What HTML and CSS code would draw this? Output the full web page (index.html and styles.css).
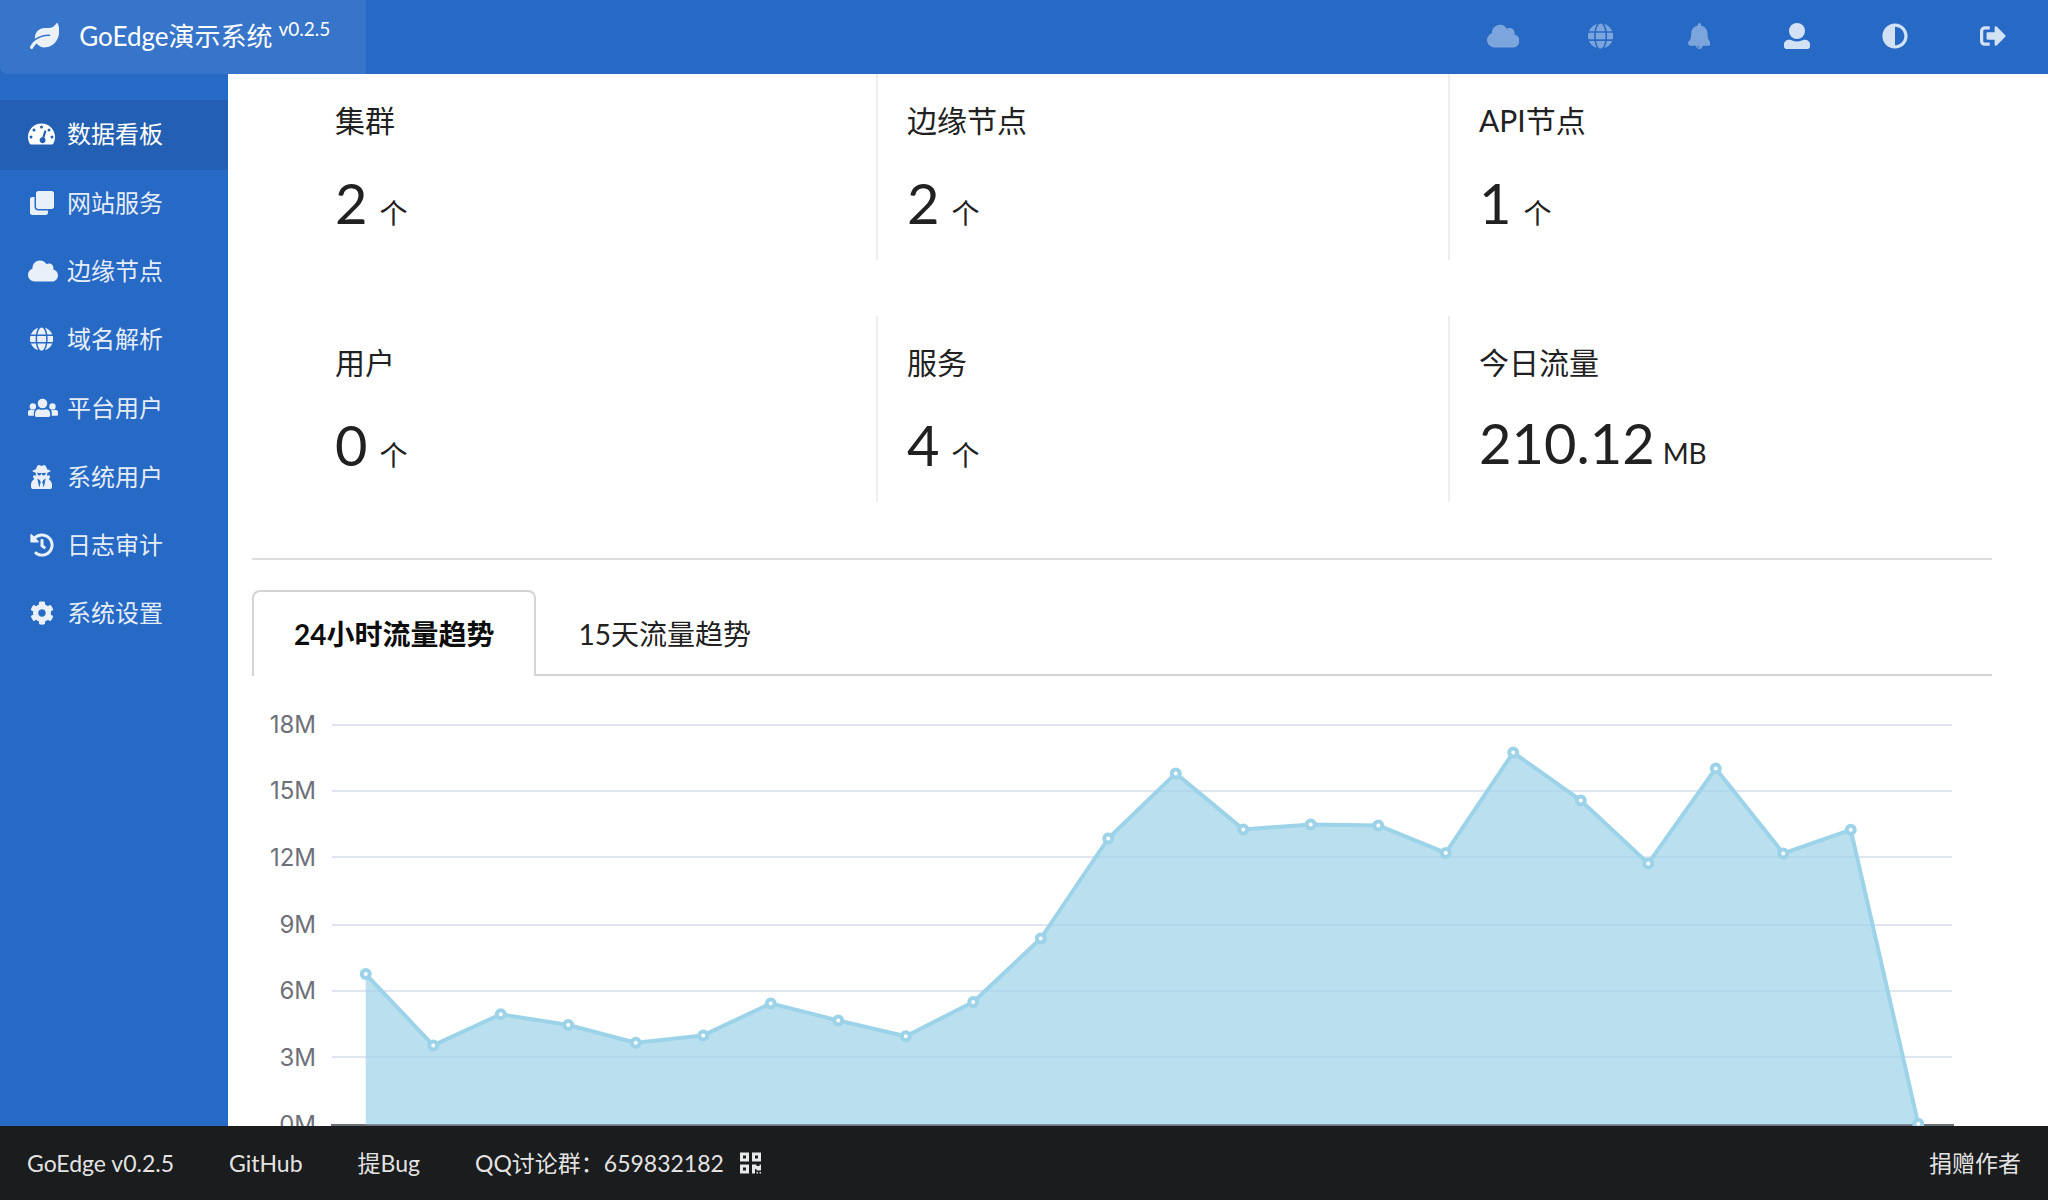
FILE: index.html
```html
<!DOCTYPE html>
<html lang="zh-CN">
<head>
<meta charset="utf-8">
<title>GoEdge演示系统</title>
<link rel="stylesheet" href="styles.css">
</head>
<body>
<svg class="sprite" aria-hidden="true">
  <symbol id="cloud" viewBox="0 0 640 512"><path d="M537.6 226.600c4.100-10.700 6.400-22.400 6.400-34.600 0-53-43-96-96-96-19.700 0-38.100 6-53.300 16.200C367 64.200 315.300 32 256 32c-88.400 0-160 71.600-160 160 0 2.700.1 5.400.2 8.100C40.200 219.800 0 273.200 0 336c0 79.500 64.500 144 144 144h368c70.700 0 128-57.300 128-128 0-61.900-44-113.600-102.400-125.400z"/></symbol>
  <symbol id="globe" viewBox="0 0 496 512"><path d="M336.500 160C322 70.700 287.800 8 248 8s-74 62.700-88.500 152h177zM152 256c0 22.200 1.200 43.500 3.300 64h185.300c2.100-20.500 3.300-41.800 3.300-64s-1.200-43.500-3.300-64H155.300c-2.100 20.500-3.300 41.800-3.300 64zm324.700-96c-28.600-67.900-86.500-120.400-158-141.600 24.400 33.800 41.200 84.700 50 141.600h108zM177.200 18.400C105.800 39.600 47.800 92.100 19.300 160h108c8.700-56.900 25.500-107.800 49.900-141.600zM487.400 192H372.700c2.100 21 3.300 42.500 3.300 64s-1.200 43-3.300 64h114.600c5.500-20.500 8.600-41.800 8.600-64s-3.100-43.500-8.500-64zM120 256c0-21.500 1.200-43 3.300-64H8.600C3.200 212.500 0 233.800 0 256s3.200 43.500 8.600 64h114.600c-2-21-3.200-42.500-3.200-64zm39.500 96c14.500 89.300 48.700 152 88.500 152s74-62.700 88.500-152h-177zm159.300 141.600c71.400-21.200 129.400-73.700 158-141.600h-108c-8.800 56.900-25.600 107.800-50 141.600zM19.300 352c28.600 67.900 86.500 120.400 158 141.600-24.400-33.800-41.200-84.700-50-141.600h-108z"/></symbol>
</svg>
<header class="topbar">
  <a class="brand" href="#">
    <svg class="icon" viewBox="0 0 576 512"><path d="M546.200 9.700c-5.600-12.500-21.600-13-28.300-1.200C486.900 62.400 431.400 96 368 96h-80C182 96 96 182 96 288c0 7 .8 13.700 1.500 20.500C161.300 262.800 253.400 224 384 224c8.800 0 16 7.200 16 16s-7.200 16-16 16C132.600 256 26 410.100 2.400 468c-6.600 16.300 1.200 34.900 17.500 41.600 16.400 6.800 35-1.100 41.800-17.300 1.500-3.600 20.900-47.900 71.900-90.600 32.400 43.900 94 85.800 174.900 77.200C465.500 467.500 576 326.700 576 154.300c0-50.200-10.800-102.200-29.800-144.600z"/></svg>
    <span class="brand-name">GoEdge演示系统</span>
    <span class="brand-version">v0.2.5</span>
  </a>
  <nav class="tools" aria-label="工具">
    <a class="tool muted" href="#" aria-label="集群"><svg class="icon" viewBox="0 0 640 512"><use href="#cloud"/></svg></a>
    <a class="tool muted" href="#" aria-label="域名"><svg class="icon" viewBox="0 0 496 512"><use href="#globe"/></svg></a>
    <a class="tool muted" href="#" aria-label="消息"><svg class="icon" viewBox="0 0 448 512"><path fill-rule="evenodd" d="M433.884 366.059C411.634 343.809 384 316.118 384 208c0-79.394-57.831-145.269-133.663-157.830A31.845 31.845 0 0 0 256 32c0-17.673-14.327-32-32-32s-32 14.327-32 32c0 6.750 2.095 13.008 5.663 18.170C121.831 62.731 64 128.606 64 208c0 108.118-27.643 135.809-49.893 158.059C-16.042 396.208 5.325 448 48.048 448H160c0 35.346 28.654 64 64 64s64-28.654 64-64h111.943c42.638 0 64.151-51.731 33.941-81.941zM224 472a8 8 0 0 1 0 16c-22.056 0-40-17.944-40-40h16c0 13.234 10.766 24 24 24z"/></svg></a>
    <a class="tool" href="#" aria-label="账户"><svg class="icon" viewBox="0 0 512 512"><ellipse cx="256" cy="158" rx="158" ry="158"/><path d="M0 424c0-50 42-92 104-92 26 0 40 6 56 13 60 26 132 26 192 0 16-7 30-13 56-13 62 0 104 42 104 92v40c0 26-22 48-48 48H48c-26 0-48-22-48-48z"/></svg></a>
    <a class="tool" href="#" aria-label="切换主题"><svg class="icon" viewBox="0 0 512 512"><path fill-rule="evenodd" d="M8 256c0 136.966 111.033 248 248 248s248-111.034 248-248S392.966 8 256 8 8 119.033 8 256zm248 184V72c101.705 0 184 82.311 184 184 0 101.705-82.311 184-184 184z"/></svg></a>
    <a class="tool" href="#" aria-label="退出登录"><svg class="icon" viewBox="0 0 512 512"><path d="M497 273L329 441c-15 15-41 4.500-41-17v-96H152c-13.300 0-24-10.700-24-24v-96c0-13.300 10.700-24 24-24h136V88c0-21.400 25.900-32 41-17l168 168c9.300 9.400 9.300 24.600 0 34zM192 436v-40c0-6.600-5.400-12-12-12H96c-17.700 0-32-14.300-32-32V160c0-17.700 14.300-32 32-32h84c6.600 0 12-5.400 12-12V76c0-6.600-5.400-12-12-12H96c-53 0-96 43-96 96v192c0 53 43 96 96 96h84c6.600 0 12-5.400 12-12z"/></svg></a>
  </nav>
</header>

<nav class="sidebar" aria-label="主菜单">
  <a class="side-link active" href="#"><span class="side-icon"><svg class="icon" viewBox="0 0 576 512"><path fill-rule="evenodd" d="M288 32C129 32 0 161 0 320c0 53 14 102 39 145 6 10 16 15 28 15h442c12 0 22-5 28-15 25-43 39-92 39-145C576 161 447 32 288 32zM256 104a32 32 0 1 0 64 0 32 32 0 1 0-64 0zM96 168a32 32 0 1 0 64 0 32 32 0 1 0-64 0zM416 168a32 32 0 1 0 64 0 32 32 0 1 0-64 0zM32 320a32 32 0 1 0 64 0 32 32 0 1 0-64 0zM480 320a32 32 0 1 0 64 0 32 32 0 1 0-64 0zM375 179c12 4 18 15 15 27l-41 131c16 12 27 31 27 52 0 35-28 63-64 63s-64-28-64-63c0-34 26-61 58-63l38-130c4-12 18-20 31-17z"/></svg></span>数据看板</a>
  <a class="side-link" href="#"><span class="side-icon"><svg class="icon" viewBox="0 0 512 512"><path d="M464 0c26.510 0 48 21.490 48 48v288c0 26.510-21.490 48-48 48H176c-26.510 0-48-21.490-48-48V48c0-26.510 21.490-48 48-48h288M176 416c-44.112 0-80-35.888-80-80V128H48c-26.510 0-48 21.490-48 48v288c0 26.510 21.490 48 48 48h288c26.510 0 48-21.490 48-48v-48H176z"/></svg></span>网站服务</a>
  <a class="side-link" href="#"><span class="side-icon"><svg class="icon" viewBox="0 0 640 512"><use href="#cloud"/></svg></span>边缘节点</a>
  <a class="side-link" href="#"><span class="side-icon"><svg class="icon" viewBox="0 0 496 512"><use href="#globe"/></svg></span>域名解析</a>
  <a class="side-link" href="#"><span class="side-icon"><svg class="icon" viewBox="0 0 640 512"><circle cx="310" cy="160" r="102"/><circle cx="104" cy="222" r="68"/><circle cx="522" cy="222" r="68"/><path d="M150 380c0-60 36-98 90-98 44 16 96 16 140 0 56 0 92 38 92 98v36c0 16-12 30-30 30H180c-18 0-30-14-30-30zM0 350c0-34 22-56 58-56 30 12 62 12 90 0-14 22-24 50-24 80v46H28c-16 0-28-12-28-28zM640 350c0-34-22-56-58-56-30 12-62 12-90 0 10 22 16 50 16 80v46h104c16 0 28-12 28-28z"/></svg></span>平台用户</a>
  <a class="side-link" href="#"><span class="side-icon"><svg class="icon" viewBox="0 0 448 512"><path fill-rule="evenodd" d="M383.900 308.300l23.900-62.600c4-10.500-3.700-21.700-15-21.700h-58.500c11-18.900 17.800-40.600 17.800-64v-.3c39.200-7.800 64-19.100 64-31.700 0-13.300-27.300-25.100-70.100-33-9.200-32.800-27-65.800-40.600-82.800-9.500-11.900-25.900-15.600-39.500-8.800l-27.600 13.800c-9 4.500-19.600 4.500-28.600 0L182.100 3.400c-13.600-6.800-30-3.100-39.500 8.800-13.500 17-31.400 50-40.600 82.800-42.700 7.900-70 19.700-70 33 0 12.600 24.800 23.900 64 31.700v.3c0 23.400 6.800 45.100 17.800 64H56.300c-11.500 0-19.200 11.700-14.700 22.300l25.800 60.200C27.300 329.800 0 372.700 0 422.400v44.800C0 491.900 20.100 512 44.800 512h358.400c24.700 0 44.800-20.100 44.800-44.800v-44.800c0-48.400-25.800-90.400-64.100-114.100zM176 480l-41.600-192 49.600 32 24 40-32 120zm96 0l-32-120 24-40 49.600-32L272 480zm41.700-298.500c-3.900 11.900-7 24.600-16.500 33.400-10.100 9.300-48 22.400-64-25-2.800-8.400-15.400-8.400-18.300 0-17 50.200-56 32.400-64 25-9.500-8.800-12.700-21.500-16.500-33.400-.8-2.500-6.300-5.700-6.300-5.800v-10.800c28.300 3.600 61 5.800 96 5.800s67.700-2.100 96-5.800v10.800c-.1.100-5.600 3.200-6.400 5.800z"/></svg></span>系统用户</a>
  <a class="side-link" href="#"><span class="side-icon"><svg class="icon" viewBox="0 0 512 512"><path d="M504 255.531c.253 136.640-111.180 248.372-247.820 248.468-59.015.042-113.223-20.530-155.822-54.911-11.077-8.940-11.905-25.541-1.839-35.607l11.267-11.267c8.609-8.609 22.353-9.551 31.891-1.984C173.062 425.135 212.781 440 256 440c101.705 0 184-82.311 184-184 0-101.705-82.311-184-184-184-48.814 0-93.149 18.969-126.068 49.932l50.754 50.754c10.080 10.080 2.941 27.314-11.313 27.314H24c-8.837 0-16-7.163-16-16V38.627c0-14.254 17.234-21.393 27.314-11.314l49.372 49.372C129.209 34.136 189.552 8 256 8c136.810 0 247.747 110.780 248 247.531zm-180.912 78.784l9.823-12.630c8.138-10.463 6.253-25.542-4.210-33.679L288 256.349V152c0-13.255-10.745-24-24-24h-16c-13.255 0-24 10.745-24 24v135.651l65.409 50.874c10.463 8.137 25.541 6.253 33.679-4.210z"/></svg></span>日志审计</a>
  <a class="side-link" href="#"><span class="side-icon"><svg class="icon" viewBox="0 0 512 512"><path d="M487.400 315.700l-42.600-24.600c4.300-23.200 4.300-47 0-70.200l42.600-24.600c4.900-2.800 7.100-8.600 5.500-14-11.100-35.600-30-67.800-54.700-94.600-3.800-4.100-10-5.100-14.800-2.300L380.800 110c-17.900-15.400-38.500-27.300-60.800-35.100V25.800c0-5.600-3.900-10.500-9.400-11.700-36.700-8.200-74.300-7.800-109.200 0-5.500 1.200-9.400 6.100-9.400 11.700V75c-22.200 7.900-42.800 19.800-60.800 35.100L88.700 85.500c-4.900-2.800-11-1.900-14.800 2.300-24.700 26.700-43.600 58.900-54.700 94.600-1.700 5.400.6 11.200 5.500 14L67.300 221c-4.300 23.200-4.300 47 0 70.200l-42.600 24.600c-4.900 2.800-7.100 8.600-5.500 14 11.100 35.600 30 67.800 54.700 94.600 3.800 4.100 10 5.100 14.800 2.300l42.600-24.600c17.900 15.400 38.500 27.300 60.800 35.100v49.200c0 5.600 3.900 10.500 9.400 11.700 36.700 8.200 74.300 7.800 109.200 0 5.500-1.200 9.400-6.100 9.400-11.700v-49.200c22.200-7.900 42.800-19.800 60.800-35.100l42.600 24.600c4.900 2.800 11 1.900 14.800-2.300 24.700-26.700 43.600-58.900 54.700-94.600 1.500-5.500-.7-11.300-5.600-14.100zM256 336c-44.100 0-80-35.900-80-80s35.900-80 80-80 80 35.900 80 80-35.900 80-80 80z"/></svg></span>系统设置</a>
</nav>

<main class="content">
  <section class="stats" aria-label="统计">
    <div class="stat"><h2 class="stat-title">集群</h2><p class="stat-value">2<span class="unit">个</span></p></div>
    <div class="stat"><h2 class="stat-title">边缘节点</h2><p class="stat-value">2<span class="unit">个</span></p></div>
    <div class="stat"><h2 class="stat-title">API节点</h2><p class="stat-value">1<span class="unit">个</span></p></div>
    <div class="stat"><h2 class="stat-title">用户</h2><p class="stat-value">0<span class="unit">个</span></p></div>
    <div class="stat"><h2 class="stat-title">服务</h2><p class="stat-value">4<span class="unit">个</span></p></div>
    <div class="stat"><h2 class="stat-title">今日流量</h2><p class="stat-value latin">210.12<span class="unit">MB</span></p></div>
  </section>
  <hr class="divider">
  <div class="tabs">
    <a class="tab active" href="#">24小时流量趋势</a>
    <a class="tab" href="#">15天流量趋势</a>
  </div>
  <svg class="chart" viewBox="0 0 1740 520" role="img" aria-label="24小时流量趋势">
    <g class="grid-lines">
      <path d="M80 49H1700M80 115H1700M80 181H1700M80 249H1700M80 315H1700M80 381H1700"/>
    </g>
    <path class="axis" d="M79 449H1702"/>
    <g class="axis-labels">
      <text x="64" y="57">18M</text>
      <text x="64" y="123">15M</text>
      <text x="64" y="190">12M</text>
      <text x="64" y="257">9M</text>
      <text x="64" y="323">6M</text>
      <text x="64" y="390">3M</text>
      <text x="64" y="457">0M</text>
    </g>
    <g id="series"></g>
  </svg>
</main>

<footer class="footer">
  <a class="foot-link" href="#">GoEdge v0.2.5</a>
  <a class="foot-link" href="#">GitHub</a>
  <a class="foot-link" href="#">提Bug</a>
  <a class="foot-link" href="#">QQ讨论群：659832182 <svg class="icon qr" viewBox="0 0 448 512"><path fill-rule="evenodd" d="M0 224h192V32H0v192zM64 96h64v64H64V96zm192-64v192h192V32H256zm128 128h-64V96h64v64zM0 480h192V288H0v192zm64-128h64v64H64v-64zm352-64h32v128h-96v-32h-32v96h-64V288h96v32h64v-32zm0 160h32v32h-32v-32zm-64 0h32v32h-32v-32z"/></svg></a>
  <a class="foot-link donate" href="#">捐赠作者</a>
</footer>
<script src="chart.js"></script>
</body>
</html>
```
FILE: styles.css
```css
* { box-sizing: border-box; }

body {
  margin: 0;
  height: 100vh;
  display: grid;
  grid-template: 74px minmax(0, 1fr) 74px / 228px minmax(0, 1fr);
  font-family: Lato, "Noto Sans CJK SC", sans-serif;
  font-size: 24px;
  line-height: 34px;
  color: #212121;
  background: #fff;
}

a { color: inherit; text-decoration: none; }

.sprite { display: none; }
.icon { display: block; flex: none; height: 24px; fill: currentColor; }

.topbar {
  grid-column: 1 / -1;
  display: flex;
  justify-content: space-between;
  background: #276ac6;
  color: #fff;
}
.topbar .icon { height: 26px; }

.brand {
  display: flex;
  align-items: center;
  width: 366px;
  padding: 0 0 2px 30px;
  background: rgba(255, 255, 255, .08);
  border-radius: 0 0 0 8px;
  font-size: 26px;
}
.brand .icon { opacity: .9; }
.brand-name { margin-left: 20px; }
.brand-version { margin-left: 6px; padding-bottom: 14px; font-size: 19px; }

.tools { display: flex; padding: 0 6px 2px 0; }
.tool {
  display: flex;
  align-items: center;
  justify-content: center;
  width: 98px;
  color: rgba(255, 255, 255, .8);
}
.tool.muted { color: rgba(255, 255, 255, .4); }

.sidebar { padding-top: 26px; background: #276ac6; }
.side-link {
  display: flex;
  align-items: center;
  gap: 12px;
  height: 68px;
  padding: 0 0 2px 28px;
  color: rgba(255, 255, 255, .9);
}
.side-link:nth-child(4n+1) { height: 70px; }
.side-link.active { background: #235fb2; color: #fff; }
.side-icon { display: flex; justify-content: safe center; width: 27px; }

.content {
  padding: 0 56px 0 24px;
  overflow: auto;
  scrollbar-width: none;
}

.stats {
  display: grid;
  grid-template-columns: repeat(3, minmax(0, 1fr));
  row-gap: 56px;
  margin: 0 -30px 0 54px;
}
.stat { height: 186px; padding: 26px 28px 0 29px; border-right: 2px solid #eee; }
.stat:nth-child(3n) { border-right: 0; }
.stat-title { margin: 0; font-size: 30px; font-weight: 400; line-height: 40px; }
.stat-value { margin: 30px 0 0; font-size: 56px; line-height: 66px; }
.unit { margin-left: 12px; font-size: 28px; }
.stat-value.latin { line-height: 62px; }
.stat-value.latin .unit { margin-left: 8px; }

.divider { margin: 56px 0 30px; border: 0; border-top: 2px solid #dedede; }

.tabs { display: flex; border-bottom: 2px solid #d4d4d5; }
.tab {
  height: 86px;
  margin-bottom: -2px;
  padding: 25px 40px;
  border: 2px solid transparent;
  border-bottom: 0;
  font-size: 28px;
}
.tab.active {
  background: #fff;
  border-color: #d4d4d5;
  border-radius: 8px 8px 0 0;
  color: #0d0d0d;
  font-weight: 700;
}

.chart { display: block; width: 100%; height: auto; }
.grid-lines { fill: none; stroke: #e0e6f1; stroke-width: 2; }
.axis { stroke: #6e7079; stroke-width: 2; }
.axis-labels {
  fill: #6e7079;
  font: 24px Inter, sans-serif;
  text-anchor: end;
}
.area { fill: #9dd3e8; fill-opacity: .7; }
.line { fill: none; stroke: #9dd3e8; stroke-width: 4; stroke-linejoin: bevel; }
.dot { fill: #fff; stroke: #9dd3e8; stroke-width: 4; }

.footer {
  grid-column: 1 / -1;
  display: flex;
  align-items: center;
  gap: 55px;
  padding: 0 27px;
  background: #1b1c1d;
  color: rgba(255, 255, 255, .9);
  font-size: 23px;
}
.foot-link { display: flex; align-items: center; }
.qr { margin-left: 16px; }
.donate { margin-left: auto; }
```
FILE: chart.js
```js
// Hourly traffic, in M
const traffic = [6.77, 3.56, 4.96, 4.48, 3.68, 4.01, 5.45, 4.68, 3.97, 5.51, 8.37, 12.87,
  15.8, 13.28, 13.5, 13.46, 12.22, 16.74, 14.58, 11.75, 16.02, 12.2, 13.26, 0.03];

const left = 80, width = 1620, base = 448.5, perUnit = 400 / 18;
const points = traffic.map((v, i) => [
  left + width * (i + 0.5) / traffic.length,
  base - v * perUnit
]);
const path = points.map(p => p.join(",")).join(" L");
const lastX = points[points.length - 1][0];

document.getElementById("series").innerHTML =
  `<path class="area" d="M${points[0][0]},${base} L${path} L${lastX},${base}Z"/>` +
  `<path class="line" d="M${path}"/>` +
  points.map(([x, y]) => `<circle class="dot" cx="${x}" cy="${y}" r="4"/>`).join("");
```
